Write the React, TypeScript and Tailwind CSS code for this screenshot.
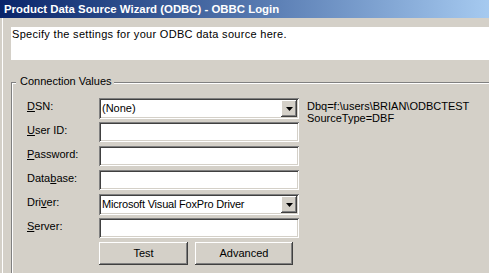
import React from "react";

const sunken =
  "shadow-[inset_1px_1px_0_#808080,inset_-1px_-1px_0_#ffffff,inset_2px_2px_0_#404040,inset_-2px_-2px_0_#d4d0c8]";
const raised =
  "shadow-[inset_-1px_-1px_0_#404040,inset_1px_1px_0_#ffffff,inset_-2px_-2px_0_#808080,inset_2px_2px_0_#d4d0c8]";

function Label({ pre, u, post }: { pre: string; u: string; post: string }) {
  return (
    <div className="w-[72px] shrink-0 pt-[2px] leading-[13px]">
      {pre}
      <span className="underline underline-offset-[1px]">{u}</span>
      {post}
    </div>
  );
}

function TextBox() {
  return <div className={`w-[200px] h-[20px] bg-white ${sunken}`} />;
}

function Combo({ value, tight }: { value: string; tight?: boolean }) {
  return (
    <div className={`w-[200px] h-[21px] bg-white flex items-center pl-[3px] pr-[2px] ${sunken}`}>
      <span className={`flex-1 leading-[13px] whitespace-nowrap ${tight ? "tracking-[-0.2px]" : ""}`}>{value}</span>
      <div className={`w-[16px] h-[17px] bg-[#d4d0c8] flex items-center justify-center ${raised}`}>
        <svg width="7" height="4" viewBox="0 0 7 4">
          <polygon points="0,0 7,0 3.5,4" fill="#000" />
        </svg>
      </div>
    </div>
  );
}

export default function App() {
  return (
    <div className="w-[489px] h-[273px] overflow-hidden bg-[#d4d0c8] flex flex-col font-['Liberation_Sans',Arial,sans-serif] text-[11px] text-black">
      <div className="h-[18px] shrink-0 bg-gradient-to-r from-[#0a246a] to-[#a6caf0] pl-[4px] text-white font-bold text-[11.4px] leading-[18px] whitespace-nowrap">
        Product Data Source Wizard (ODBC) - OBBC Login
      </div>
      <div className="flex-1 flex flex-col pl-[11px] pt-[9px] shadow-[inset_2px_0_0_#d4d0c8,inset_3px_0_0_#ffffff]">
        <div className="h-[33px] shrink-0 bg-white pl-[1px] pt-[1px] leading-[13px] tracking-[0.3px] whitespace-nowrap">
          Specify the settings for your ODBC data source here.
        </div>
        <div className="mt-[22px] relative flex-1 border-t border-l border-[#808080] shadow-[inset_1px_1px_0_#ffffff]">
          <span className="absolute -top-[8px] left-[4px] pl-[4px] pr-[2px] bg-[#d4d0c8] leading-[13px] whitespace-nowrap">
            Connection Values
          </span>
          <div className="flex pl-[15px] pt-[15px]">
            <div className="flex flex-col">
              <div className="flex h-[21px]">
                <Label pre="" u="D" post="SN:" />
                <Combo value="(None)" />
              </div>
              <div className="flex h-[20px] mt-[3px]">
                <Label pre="" u="U" post="ser ID:" />
                <TextBox />
              </div>
              <div className="flex h-[20px] mt-[4px]">
                <Label pre="" u="P" post="assword:" />
                <TextBox />
              </div>
              <div className="flex h-[20px] mt-[4px]">
                <Label pre="Data" u="b" post="ase:" />
                <TextBox />
              </div>
              <div className="flex h-[21px] mt-[4px]">
                <Label pre="Dri" u="v" post="er:" />
                <Combo value="Microsoft Visual FoxPro Driver" tight />
              </div>
              <div className="flex h-[20px] mt-[3px]">
                <Label pre="" u="S" post="erver:" />
                <TextBox />
              </div>
              <div className="flex mt-[4px] pl-[72px] gap-[7px]">
                <button className={`w-[89px] h-[23px] bg-[#d4d0c8] leading-[13px] ${raised}`}>Test</button>
                <button className={`w-[98px] h-[23px] bg-[#d4d0c8] leading-[13px] ${raised}`}>Advanced</button>
              </div>
            </div>
            <div className="ml-[8px] leading-[12px] pt-[2px] whitespace-nowrap">
              <div>Dbq=f:\users\BRIAN\ODBCTEST</div>
              <div>SourceType=DBF</div>
            </div>
          </div>
        </div>
      </div>
    </div>
  );
}
